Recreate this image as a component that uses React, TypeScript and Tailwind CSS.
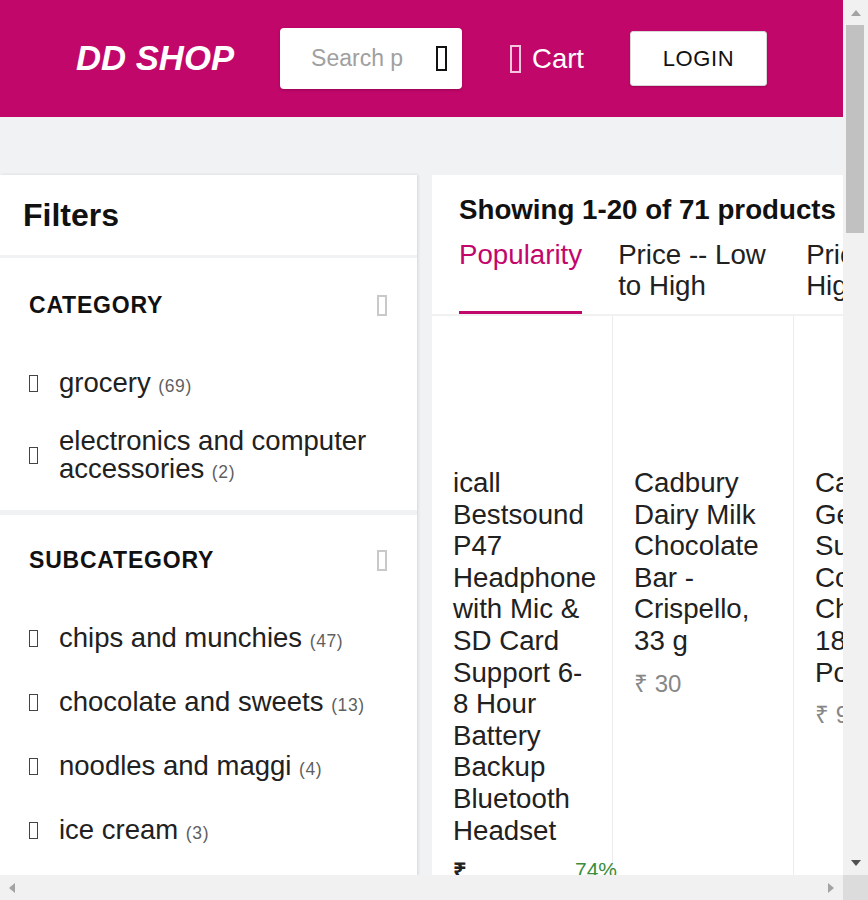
import React from "react";

function Tofu({ className }: { className: string }) {
  return <span className={"inline-block shrink-0 " + className} />;
}

function Header() {
  return (
    <header className="h-[117px] bg-[#c2076b] flex items-center pl-[76px] w-full">
      <div className="text-white font-bold italic text-[34.7px] leading-none whitespace-nowrap">DD SHOP</div>
      <div className="ml-[46px] w-[182px] h-[61px] bg-white rounded-[4px] shadow-[0_1px_3px_rgba(0,0,0,0.25)] flex items-center pl-[31px] pr-[15px]">
        <input
          className="w-[93px] bg-transparent outline-none text-[23px] text-[#212121] placeholder:text-[#a0a0a0]"
          placeholder="Search products"
          readOnly
        />
        <Tofu className="ml-auto w-[11px] h-[25px] border-2 border-[#111]" />
      </div>
      <div className="ml-[48px] flex items-center text-white">
        <Tofu className="w-[11px] h-[28px] border-2 border-[#f4c6dd]" />
        <span className="ml-[11px] text-[27.5px] leading-none">Cart</span>
      </div>
      <button className="ml-[46px] w-[137px] h-[55px] bg-white border border-[#d8d8d8] rounded-[3px] shadow-[0_1px_2px_rgba(0,0,0,0.2)] text-[22px] tracking-[0.6px] text-[#111]">
        LOGIN
      </button>
    </header>
  );
}

type Item = { label: string; count: number; tight?: boolean };

function FilterSection({ title, items, first }: { title: string; items: Item[]; first?: boolean }) {
  return (
    <div
      className={
        "pl-[29px] pr-[30px] " +
        (first ? "pt-[29px] pb-[9px] border-b-[5px] border-[#f1f2f4]" : "pt-[27px]")
      }
    >
      <div className="h-[36px] flex items-center justify-between">
        <span className="text-[23px] font-bold tracking-[0.8px] text-[#111]">{title}</span>
        <Tofu className="w-[10px] h-[21px] border-2 border-[#c9c9c9]" />
      </div>
      <ul className="mt-[28px]">
        {items.map((it) => (
          <li key={it.label} className={"flex items-center py-[18px] " + (it.tight ? "-mt-[6px]" : "")}>
            <Tofu className="w-[9px] h-[17px] border-[1.5px] border-[#444] mr-[21px]" />
            <span className="text-[27.5px] leading-[28px] text-[#212121]">
              {it.label}{" "}
              <span className="text-[17.5px] leading-none tracking-[0.6px] text-[#5f5f5f]">({it.count})</span>
            </span>
          </li>
        ))}
      </ul>
    </div>
  );
}

function Sidebar() {
  return (
    <aside className="w-[417px] shrink-0 bg-white shadow-[1px_0_3px_rgba(0,0,0,0.12)] h-[1400px]">
      <div className="h-[83px] flex items-center pl-[23px] border-b-[3px] border-[#f1f2f4]">
        <span className="text-[32px] font-bold text-[#111]">Filters</span>
      </div>
      <FilterSection
        title="CATEGORY"
        first
        items={[
          { label: "grocery", count: 69 },
          { label: "electronics and computer accessories", count: 2, tight: true },
        ]}
      />
      <FilterSection
        title="SUBCATEGORY"
        items={[
          { label: "chips and munchies", count: 47 },
          { label: "chocolate and sweets", count: 13 },
          { label: "noodles and maggi", count: 4 },
          { label: "ice cream", count: 3 },
          { label: "biscuits", count: 2 },
          { label: "headphones", count: 2 },
        ]}
      />
    </aside>
  );
}

type Product = { title: string; price?: string };

function Card({ p, first }: { p: Product; first?: boolean }) {
  return (
    <div className="w-[181px] shrink-0 border-r border-[#ececec] pl-[21px] pr-[15px]">
      <div className="h-[151px]" />
      <div className="text-[27.7px] leading-[31.6px] text-[#212121]">{p.title}</div>
      {first ? (
        <div className="flex mt-[12px] items-start">
          <span className="w-[20px] text-[24px] leading-[27px] text-[#212121] font-bold">₹ 259</span>
          <span className="ml-[102px] w-[44px] shrink-0 text-[21px] leading-[24px] text-[#388e3c]">74% off</span>
        </div>
      ) : (
        <div className="mt-[13px] text-[24px] leading-[27px] text-[#878787]">{p.price}</div>
      )}
    </div>
  );
}

function Products() {
  const products: Product[] = [
    { title: "icall Bestsound P47 Headphone with Mic & SD Card Support 6-8 Hour Battery Backup Bluetooth Headset" },
    { title: "Cadbury Dairy Milk Chocolate Bar - Crispello, 33 g", price: "₹ 30" },
    { title: "Cadbury Gems Surprise Cone Chocolate 18 gm Pouch", price: "₹ 99" },
    { title: "Lay's India's Magic Masala Potato Chips", price: "₹ 20" },
  ];
  return (
    <section className="flex-1 min-w-[740px] bg-white h-[1400px]">
      <div className="pl-[27px] pt-[19px] border-b-2 border-[#f1f1f1]">
        <div className="text-[27.7px] leading-[32px] font-bold text-[#111] whitespace-nowrap">
          Showing 1-20 of 71 products
        </div>
        <div className="mt-[13px] flex gap-[36px]">
          {["Popularity", "Price -- Low to High", "Price -- High to Low", "Newest First"].map((t, i) => (
            <div
              key={t}
              className={
                "max-w-[152px] shrink-0 text-[27.7px] leading-[31px] pb-[10px] border-b-[3px] " +
                (i === 0 ? "border-[#c2076b] text-[#c2076b]" : "border-transparent text-[#212121]")
              }
            >
              {t}
            </div>
          ))}
        </div>
      </div>
      <div className="flex">
        {products.map((p, i) => (
          <Card key={i} p={p} first={i === 0} />
        ))}
      </div>
    </section>
  );
}

function Arrow({ dir, color }: { dir: "up" | "down" | "left" | "right"; color: string }) {
  const pts =
    dir === "up"
      ? "0,8 5,2 10,8"
      : dir === "down"
      ? "0,2 10,2 5,8"
      : dir === "left"
      ? "8,0 8,10 2,5"
      : "2,0 2,10 8,5";
  return (
    <svg width="10" height="10" viewBox="0 0 10 10">
      <polygon points={pts} fill={color} />
    </svg>
  );
}

export default function App() {
  return (
    <div
      className="w-[868px] h-[900px] flex flex-col overflow-hidden bg-[#f1f2f4]"
      style={{ fontFamily: '"Liberation Sans", Arial, sans-serif' }}
    >
      <div className="flex flex-1 min-h-0">
        <div className="flex-1 min-w-0 overflow-hidden">
          <div className="w-[1200px]">
            <Header />
            <div className="flex gap-[15px] pt-[58px]">
              <Sidebar />
              <Products />
            </div>
          </div>
        </div>
        <div className="w-[25px] shrink-0 bg-[#f1f1f1] flex flex-col items-center">
          <div className="h-[25px] flex items-center justify-center">
            <Arrow dir="up" color="#a3a3a3" />
          </div>
          <div className="w-[18px] h-[208px] bg-[#c1c1c1] ml-[-1px]" />
          <div className="flex-1" />
          <div className="h-[25px] flex items-center justify-center">
            <Arrow dir="down" color="#505050" />
          </div>
        </div>
      </div>
      <div className="h-[25px] shrink-0 flex bg-[#f1f1f1]">
        <div className="flex-1 flex items-center justify-between px-[7px]">
          <Arrow dir="left" color="#a3a3a3" />
          <Arrow dir="right" color="#a3a3a3" />
        </div>
        <div className="w-[25px] bg-[#dcdcdc]" />
      </div>
    </div>
  );
}
